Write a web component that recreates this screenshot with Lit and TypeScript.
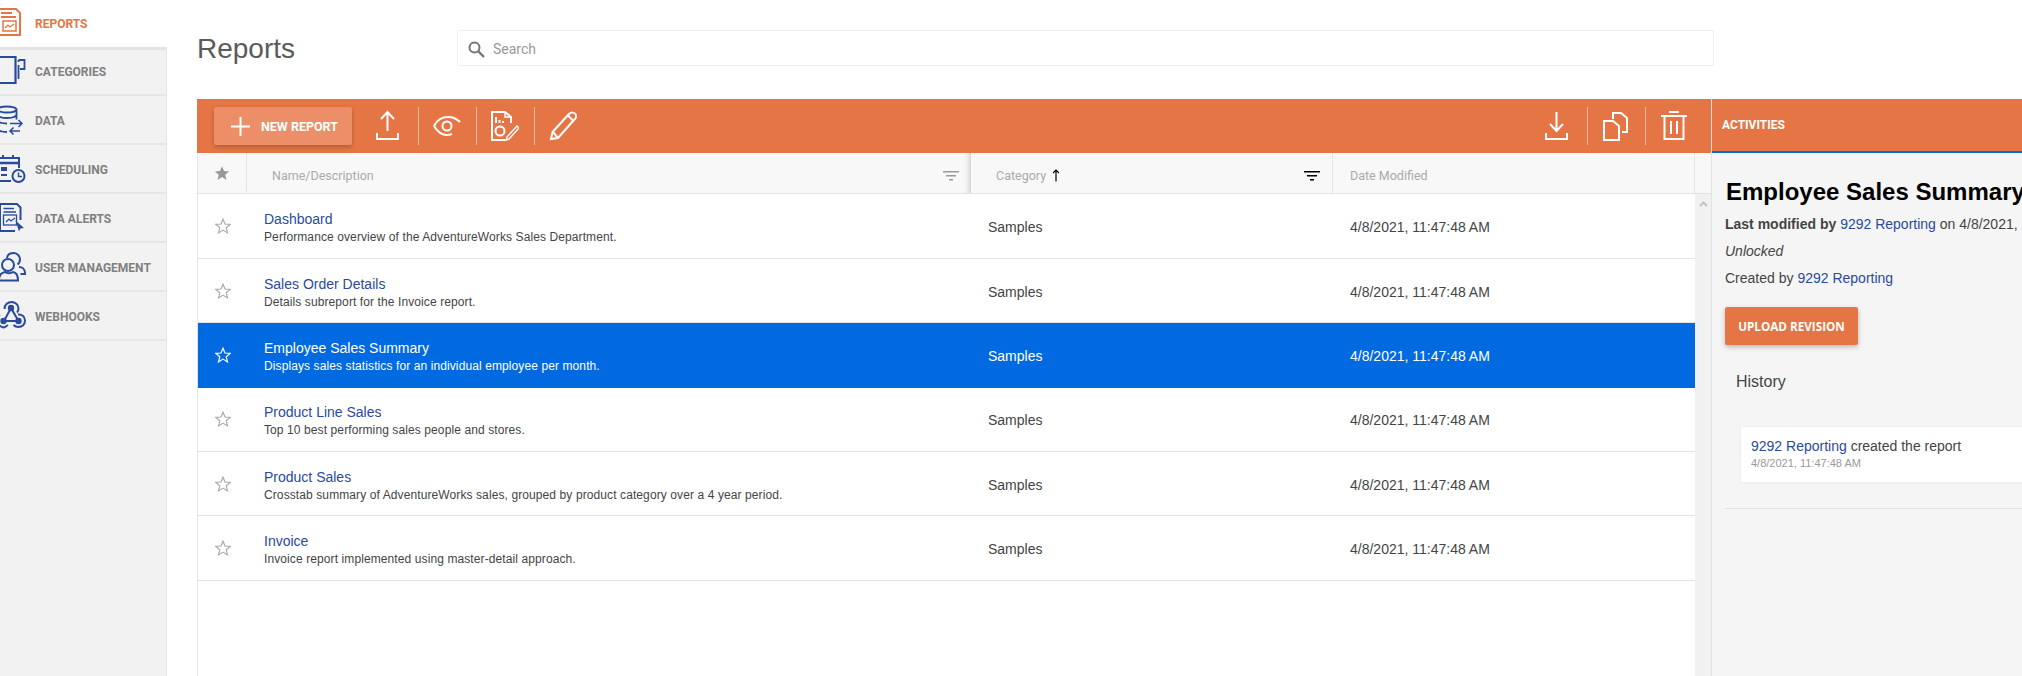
import { LitElement, html, css, svg } from "lit";
import { customElement } from "lit/decorators.js";

const BLUE = "#2a4b9b";
const ORANGE = "#e57544";

const navIcons: Record<string, unknown> = {
  reports: svg`<g fill="none" stroke="${ORANGE}" stroke-width="2"><path d="M-3 9H16l4 4V35H-3z"/><path d="M1 13h11M1 17h15"/><rect x="3" y="21" width="13" height="10" stroke-width="1.500"/><path d="M5 28l3-3 2 2 4-3" stroke-width="1.200"/></g>`,
  categories: svg`<g fill="none" stroke="${BLUE}" stroke-width="2.200"><path d="M-3 10H15.500V36H-3"/><path d="M18.500 13H24.500V22H20M18.500 13V15M18.500 18V32" stroke-width="1.800"/></g>`,
  data: svg`<g fill="none" stroke="${BLUE}" stroke-width="1.800"><ellipse cx="7" cy="13.500" rx="9.500" ry="3"/><path d="M-2.500 13.500v19c0 2 4 3.500 9.500 3.500M16.500 13.500v5c0 2-4 3.500-9.500 3.500s-9.500-1.500-9.500-3.500M16.500 18.500v5M-2.500 24c0 2 4 3.500 9.500 3.500"/><path d="M10 27.500H22M18.500 24L22 27.500 18.500 31" stroke-width="1.500"/><path d="M20 35H10M13.500 31.500L10 35l3.500 3.500" stroke-width="1.500"/></g>`,
  scheduling: svg`<g fill="none" stroke="${BLUE}" stroke-width="2"><path d="M11 36H-2V13H19V23"/><path d="M-2 18H19" stroke-width="2.500"/><path d="M3 10v4M13 10v4"/><path d="M1 22h6v4H1z" fill="${BLUE}" stroke="none"/><path d="M1 30h6"/><circle cx="18.500" cy="31" r="6"/><path d="M18.500 27.500V31.500H22" stroke-width="1.500"/></g>`,
  alerts: svg`<g transform="translate(0 2)"><g fill="none" stroke="${BLUE}" stroke-width="2"><path d="M15 35H0V8H17l3.500 3.500V24"/><path d="M3.500 12.500H14M3.500 16H16" stroke-width="1.300"/><rect x="3.500" y="19" width="13" height="10" stroke-width="1.300"/><path d="M6 26l3-3 2 2 4-3" stroke-width="1.200"/></g><path d="M15.500 24.500L24 32l-3.500.5-1.500 3z" fill="${BLUE}"/></g>`,
  users: svg`<g fill="none" stroke="${BLUE}" stroke-width="2"><circle cx="8" cy="22" r="6"/><path d="M-1 37.500c0-6 3-8 6-8.500 2 1.500 6 1.500 8 0 3 .5 5 3 5 8.500z"/><path d="M7 15c.5-3.500 3.500-5 6.500-5s6.500 2.500 6.500 6c0 2.500-1 4.500-2.500 5.500"/><path d="M19 24c3 0 6 2 6 6v1h-4.500"/></g>`,
  hooks: svg`<g fill="none" stroke="${BLUE}" stroke-width="2"><path d="M4 29L11 16"/><path d="M4.500 17c0-4.500 3.500-7 7-7s7 2.500 7 6.500c0 1.500-.5 3-1.500 4"/><path d="M11 16L18.500 29"/><path d="M18 22.500c3.500-.5 7 2 7 6S22 35 18.500 35c-2 0-3.500-.5-5-2"/><path d="M4 29H18.500"/><path d="M0 23c-3 2-3.500 5-2.500 7.500S2 36.500 5 35l3-2"/></g><g fill="${BLUE}"><circle cx="11" cy="16" r="3.200"/><circle cx="3.500" cy="29" r="3.200"/><circle cx="18.500" cy="29" r="3.200"/></g>`,
};

const nav = [
  { key: "reports", label: "REPORTS" },
  { key: "categories", label: "CATEGORIES" },
  { key: "data", label: "DATA" },
  { key: "scheduling", label: "SCHEDULING" },
  { key: "alerts", label: "DATA ALERTS" },
  { key: "users", label: "USER MANAGEMENT" },
  { key: "hooks", label: "WEBHOOKS" },
];

const rows = [
  ["Dashboard", "Performance overview of the AdventureWorks Sales Department."],
  ["Sales Order Details", "Details subreport for the Invoice report."],
  ["Employee Sales Summary", "Displays sales statistics for an individual employee per month."],
  ["Product Line Sales", "Top 10 best performing sales people and stores."],
  ["Product Sales", "Crosstab summary of AdventureWorks sales, grouped by product category over a 4 year period."],
  ["Invoice", "Invoice report implemented using master-detail approach."],
];

const STAR = "M8 1.200l2 4.800 5.200.4-4 3.400 1.300 5.100L8 12.100 3.500 14.900l1.300-5.100-4-3.400L6 6z";

const toolIcon = (w: number, body: unknown) => html`<svg class="tool" width="${w}" height="38" viewBox="0 0 ${w} 38">${body}</svg>`;

const filterIcon = (cls: string) => html`<svg class="filter ${cls}" width="16" height="10" viewBox="0 0 16 10"><path d="M0 0h16v1.500H0zM3 4h10v1.500H3zM6 8h4v1.500H6z" fill="currentColor"/></svg>`;

@customElement("app-root")
export class AppRoot extends LitElement {
  static styles = css`
    :host { display: block; font-family: "Liberation Sans", Arial, sans-serif; color: #444; }
    .app { display: flex; width: 2022px; height: 676px; overflow: hidden; background: #fff; }

    .side { width: 167px; flex: none; background: #f2f2f2; border-right: 1px solid #e6e6e6; box-sizing: border-box; }
    .nav { display: flex; align-items: center; height: 49px; box-sizing: border-box; border-bottom: 2px solid #e6e6e6; font: 700 12px Roboto, sans-serif; color: #808080; }
    .nav svg { flex: none; align-self: flex-start; }
    .nav:nth-child(n+3) span { margin-top: 2px; }
    .nav.on { background: #fff; color: #e57544; height: 47px; border-bottom: 0; margin-right: -1px; position: relative; }
    .nav.on + .nav { border-top: 3px solid #e4e4e4; }
    .nav.on + .nav svg { margin-top: -3px; }

    .main { flex: 1; min-width: 0; display: flex; flex-direction: column; padding-left: 30px; }
    .top { height: 99px; flex: none; display: flex; box-sizing: border-box; padding-top: 30px; }
    h1 { margin: 0; padding-top: 1px; width: 260px; flex: none; font: 400 28px/36px "Liberation Sans", sans-serif; color: #5a5a5a; }
    .search { width: 1257px; height: 36px; box-sizing: border-box; border: 1px solid #eee; border-radius: 2px; display: flex; align-items: center; padding: 2px 0 0 10px; gap: 8px; color: #999; font: 400 14px Roboto, sans-serif; }

    .work { flex: 1; display: flex; min-height: 0; }
    .left { width: 1514px; flex: none; display: flex; flex-direction: column; }
    .bar { height: 54px; flex: none; background: #e57544; display: flex; align-items: center; padding-left: 17px; padding-right: 24px; box-sizing: border-box; }
    .newbtn { width: 138px; height: 38px; background: #ec8f68; border-radius: 2px; box-shadow: 0 2px 4px rgba(0,0,0,.22); display: flex; align-items: center; padding-left: 17px; gap: 11px; box-sizing: border-box; color: #fff; font: 700 12.5px Roboto, sans-serif; margin-right: 24px; }
    .tool { flex: none; display: block; }
    .sep { width: 1px; height: 38px; background: rgba(255,255,255,.5); flex: none; }
    .sep.a { margin: 0 14px 0 19px; }
    .sep.b { margin: 0 14px 0 15px; }
    .sep.c { margin: 0 15px 0 17px; }
    .sep.d { margin: 0 15px 0 19px; }
    .grow { flex: 1; }

    .table { flex: 1; border-left: 1px solid #e5e5e5; min-height: 0; display: flex; flex-direction: column; }
    .thead { height: 41px; flex: none; display: flex; background: #f8f8f8; border-bottom: 1px solid #e3e3e3; box-sizing: border-box; font: 400 12.5px Roboto, sans-serif; color: #aaa; }
    .th { display: flex; align-items: center; box-sizing: border-box; border-right: 1px solid #e6e6e6; height: 40px; padding-top: 5px; }
    .th.star { width: 49px; justify-content: center; padding: 0 0 1px; }
    .th.name { width: 724px; padding-left: 25px; padding-right: 12px; border-right: 0; box-shadow: inset -6px 0 6px -5px rgba(0,0,0,.22); }
    .th.cat { width: 362px; padding-left: 25px; padding-right: 12px; }
    .th.date { width: 362px; padding-left: 17px; }
    .filter { margin-left: auto; color: #999; }
    .filter.on { color: #000; }
    .arrow { margin-left: 6px; color: #000; }

    .body { flex: 1; display: flex; min-height: 0; }
    .rows { width: 1497px; flex: none; padding-top: .7px; }
    .scroll { flex: 1; background: #f1f1f1; display: flex; justify-content: center; padding-top: 7px; align-items: flex-start; }
    .row { height: 64.33px; box-sizing: border-box; border-bottom: 1px solid #e3e3e3; display: flex; align-items: center; }
    .row.sel { background: #016ae0; color: #fff; border-bottom-color: #016ae0; }
    .cstar { width: 49px; flex: none; display: flex; justify-content: center; color: #aaa; }
    .sel .cstar { color: #fff; }
    .cname { width: 724px; flex: none; padding: 4px 0 0 17px; box-sizing: border-box; }
    .title { font-size: 14px; line-height: 18px; color: #2a4b9b; }
    .sel .title { color: #fff; }
    .desc { font-size: 12px; line-height: 18px; letter-spacing: .1px; }
    .ccat { width: 362px; flex: none; padding: 2px 0 0 17px; box-sizing: border-box; font-size: 14px; }
    .cdate { font-size: 14px; padding: 2px 0 0 17px; }

    .panel { flex: 1; min-width: 0; background: #f5f5f5; border-left: 1px solid #e2e2e2; overflow: hidden; }
    .ptab { height: 54px; box-sizing: border-box; background: #e57544; border-bottom: 2px solid #016ae0; color: #fff; font: 700 12px/52px Roboto, sans-serif; padding-left: 10px; }
    .pbody { padding: 23px 0 0 13px; }
    h2 { margin: 0 0 0 1px; font: 700 24px/32px "Liberation Sans", sans-serif; color: #000; white-space: nowrap; }
    .line { font-size: 14px; line-height: 20px; white-space: nowrap; margin-top: 7px; }
    .line.first { margin-top: 6px; }
    a { color: #2a4b9b; text-decoration: none; }
    .upload { width: 133px; height: 38px; margin-top: 19px; background: #e57544; border-radius: 2px; box-shadow: 0 2px 5px rgba(0,0,0,.25); color: #fff; font: 700 11.7px/38px "Open Sans", sans-serif; text-align: center; }
    h3 { margin: 26px 0 0 11px; font: 400 16px/22px "Liberation Sans", sans-serif; color: #444; }
    .card { margin: 34px 0 0 16px; height: 55px; background: #fff; box-sizing: border-box; padding: 11px 0 0 10px; box-shadow: 0 0 2px rgba(0,0,0,.08); }
    .card .who { font-size: 14px; line-height: 16px; }
    .card .when { font-size: 11px; line-height: 14px; color: #999; margin-top: 2px; }
    .rule { height: 1px; background: #e2e2e2; margin-top: 26px; }
  `;

  render() {
    const w = "#fff";
    return html`<div class="app">
      <aside class="side">
        ${nav.map((n, i) => html`<div class="nav ${i === 0 ? "on" : ""}">
          <svg width="35" height="44" viewBox="0 0 35 44">${navIcons[n.key]}</svg>
          <span>${n.label}</span>
        </div>`)}
      </aside>
      <div class="main">
        <div class="top">
          <h1>Reports</h1>
          <div class="search">
            <svg width="17" height="17" viewBox="0 0 17 17"><circle cx="6.500" cy="6.500" r="5" fill="none" stroke="#757575" stroke-width="2"/><path d="M10.500 10.500L16 16" stroke="#757575" stroke-width="2.400"/></svg>
            <span>Search</span>
          </div>
        </div>
        <div class="work">
          <div class="left">
            <div class="bar">
              <div class="newbtn">
                <svg width="19" height="19" viewBox="0 0 19 19"><path d="M8.500 0h2v19h-2zM0 8.500h19v2H0z" fill="#fff"/></svg>
                <span>NEW REPORT</span>
              </div>
              ${toolIcon(23, svg`<g fill="none" stroke="${w}" stroke-width="2"><path d="M11.500 24V6M5 12l6.500-7L18 12"/><path d="M1 26v6h21v-6"/></g>`)}
              <span class="sep a"></span>
              ${toolIcon(28, svg`<g fill="none" stroke="${w}" stroke-width="2"><path d="M1 19c3-6 8-9 14-9 5 0 9 2 12 5"/><path d="M1 19c3 5 7 9 13 9 2 0 3.500-.5 5-1"/><circle cx="14" cy="19" r="4.500"/></g>`)}
              <span class="sep b"></span>
              ${toolIcon(28, svg`<g fill="none" stroke="${w}" stroke-width="2"><path d="M14 33H1V5h13l6 5v6"/><path d="M14 5v5h6" stroke-width="1.500"/><path d="M5 10v6M8.500 13v3M12 14v2"/><circle cx="9" cy="24" r="4.500"/><path d="M16 30l10-11 2 2-10 11-3 1z" stroke-width="1.500"/></g>`)}
              <span class="sep b"></span>
              ${toolIcon(28, svg`<g fill="none" stroke="${w}" stroke-width="2"><path d="M2 32l1.500-7L20 7c2-2 6-2 7 1s-1 4-2.500 5.500L9 31z"/><path d="M4 25l5 6M19 8.500l5 5"/></g>`)}
              <span class="grow"></span>
              ${toolIcon(23, svg`<g fill="none" stroke="${w}" stroke-width="2"><path d="M11.500 5V24M5 17l6.500 7L18 17"/><path d="M1 26v6h21v-6"/></g>`)}
              <span class="sep d"></span>
              ${toolIcon(25, svg`<g fill="none" stroke="${w}" stroke-width="2"><path d="M10 12V6h8l6 5v14h-5"/><path d="M1 14h9l6 5v14H1z"/></g>`)}
              <span class="sep c"></span>
              ${toolIcon(26, svg`<g fill="none" stroke="${w}" stroke-width="2"><path d="M0 9h26M8 5h10"/><path d="M3.500 9v23h19V9"/><path d="M10 14v13M16 14v13"/></g>`)}
            </div>
            <div class="table">
              <div class="thead">
                <div class="th star"><svg width="16" height="16" viewBox="0 0 16 16"><path d="${STAR}" fill="#999"/></svg></div>
                <div class="th name"><span>Name/Description</span>${filterIcon("")}</div>
                <div class="th cat"><span>Category</span><svg class="arrow" width="8" height="13" viewBox="0 0 8 13"><path d="M4 12.500V1M1 4l3-3 3 3" fill="none" stroke="currentColor" stroke-width="1.200"/></svg>${filterIcon("on")}</div>
                <div class="th date"><span>Date Modified</span></div>
              </div>
              <div class="body">
                <div class="rows">
                  ${rows.map((r, i) => html`<div class="row ${i === 2 ? "sel" : ""}">
                    <div class="cstar"><svg width="16" height="16" viewBox="0 0 16 16"><path d="${STAR}" fill="none" stroke="currentColor" stroke-width="1.200"/></svg></div>
                    <div class="cname"><div class="title">${r[0]}</div><div class="desc">${r[1]}</div></div>
                    <div class="ccat">Samples</div>
                    <div class="cdate">4/8/2021, 11:47:48 AM</div>
                  </div>`)}
                </div>
                <div class="scroll"><svg width="9" height="6" viewBox="0 0 9 6"><path d="M1 5l3.500-3.500L8 5" fill="none" stroke="#c4c4c4" stroke-width="2"/></svg></div>
              </div>
            </div>
          </div>
          <div class="panel">
            <div class="ptab">ACTIVITIES</div>
            <div class="pbody">
              <h2>Employee Sales Summary</h2>
              <div class="line first"><b>Last modified by</b> <a>9292 Reporting</a> on 4/8/2021, 11:47:48 AM</div>
              <div class="line"><i>Unlocked</i></div>
              <div class="line"><span>Created by</span> <a>9292 Reporting</a></div>
              <div class="upload">UPLOAD REVISION</div>
              <h3>History</h3>
              <div class="card">
                <div class="who"><a>9292 Reporting</a> created the report</div>
                <div class="when">4/8/2021, 11:47:48 AM</div>
              </div>
              <div class="rule"></div>
            </div>
          </div>
        </div>
      </div>
    </div>`;
  }
}
